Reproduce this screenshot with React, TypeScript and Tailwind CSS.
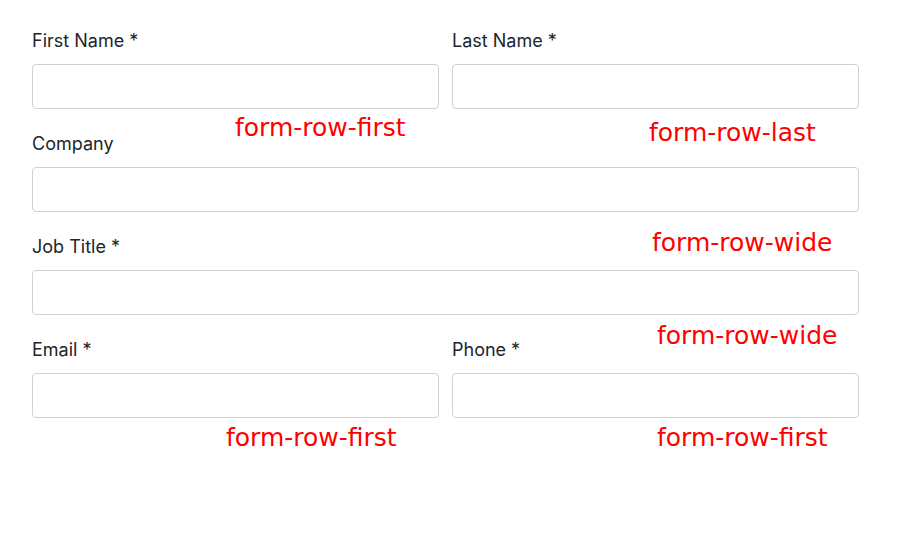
import React from 'react';

type Field = { label: string; wide?: boolean };

const rows: Field[][] = [
  [{ label: 'First Name *' }, { label: 'Last Name *' }],
  [{ label: 'Company', wide: true }],
  [{ label: 'Job Title *', wide: true }],
  [{ label: 'Email *' }, { label: 'Phone *' }],
];

// debug labels drawn over the form
const notes = [
  { text: 'form-row-first', cls: 'left-[235px] top-[115px]' },
  { text: 'form-row-last', cls: 'left-[649px] top-[120px]' },
  { text: 'form-row-wide', cls: 'left-[652px] top-[230px]' },
  { text: 'form-row-wide', cls: 'left-[657px] top-[323px]' },
  { text: 'form-row-first', cls: 'left-[226px] top-[425px]' },
  { text: 'form-row-first', cls: 'left-[657px] top-[425px]' },
];

function FormField({ label, wide }: Field) {
  return (
    <div className={wide ? 'w-[827px]' : 'w-[407px]'}>
      <label className="block text-[18px] leading-[27px] mb-[10px] text-[#212529]">{label}</label>
      <input
        type="text"
        className="block w-full h-[45px] border border-[#cdd2d8] rounded-[4px] bg-white outline-none"
      />
    </div>
  );
}

export default function App() {
  return (
    <div
      className="relative w-[900px] h-[535px] bg-white pl-[32px] pt-[27px]"
      style={{ fontFamily: 'Inter, "Liberation Sans", sans-serif' }}
    >
      {rows.map((row, i) => (
        <div key={i} className="flex gap-[13px] mb-[21px]">
          {row.map((f) => (
            <FormField key={f.label} {...f} />
          ))}
        </div>
      ))}

      {notes.map((n, i) => (
        <span
          key={i}
          className={`absolute ${n.cls} text-[25px] leading-none text-[#ff0000] whitespace-nowrap`}
          style={{ fontFamily: '"DejaVu Sans", sans-serif' }}
        >
          {n.text}
        </span>
      ))}
    </div>
  );
}
